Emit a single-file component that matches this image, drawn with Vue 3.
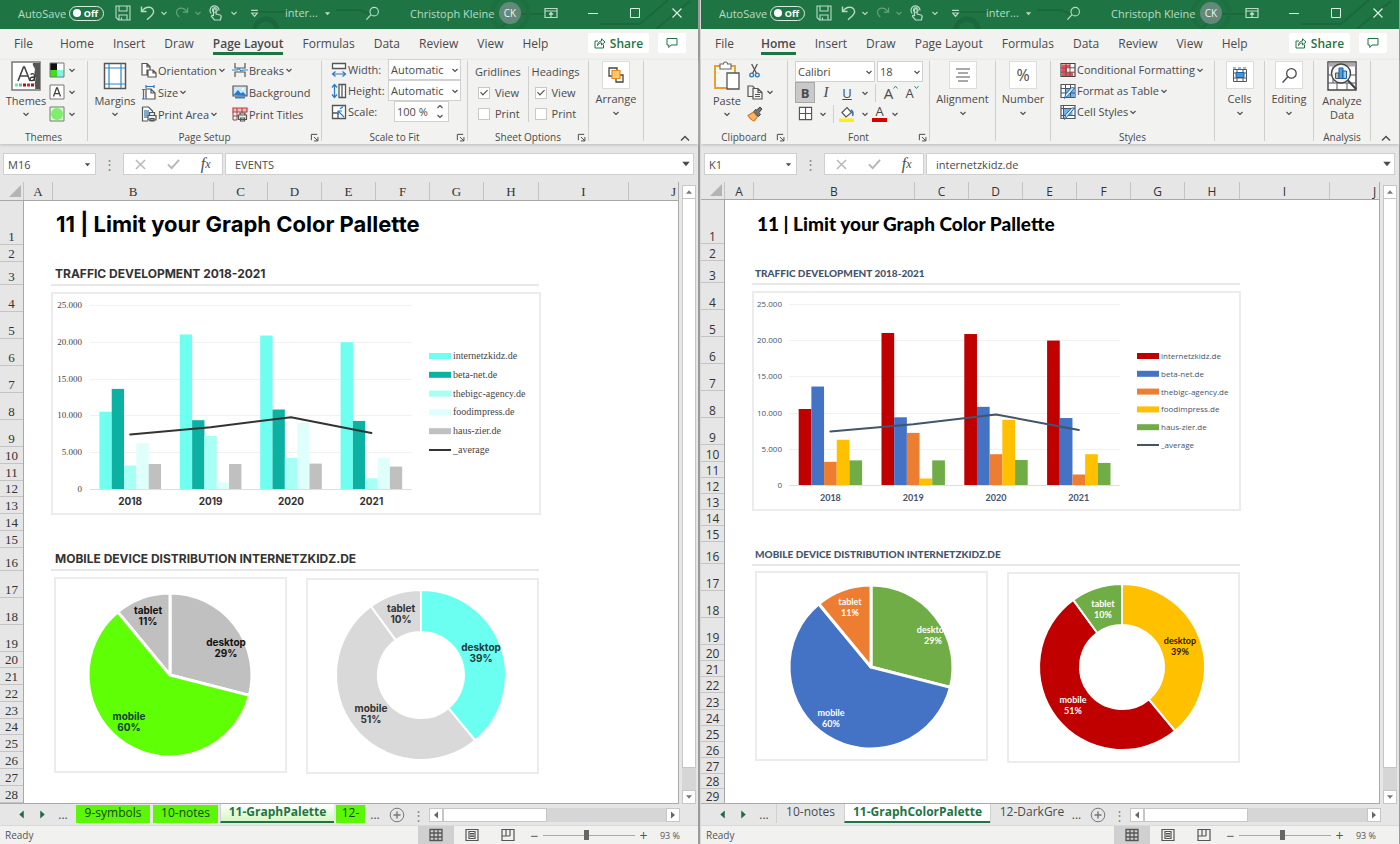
<script setup>
import { h } from 'vue'

const Ico = (p) =>
  h('svg', { class: 'ico', width: p.w || 16, height: p.h || p.w || 16, 'aria-hidden': 'true' }, [
    h('use', { href: '#i-' + p.n }),
  ])
Ico.props = ['n', 'w', 'h']

const names = ['File', 'Home', 'Insert', 'Draw', 'Page Layout', 'Formulas', 'Data', 'Review', 'View', 'Help']
const cols = ['A', 'B', 'C', 'D', 'E', 'F', 'G', 'H', 'I', 'J']
const series = ['internetzkidz.de', 'beta-net.de', 'thebigc-agency.de', 'foodimpress.de', 'haus-zier.de', '_average']
const years = [2018, 2019, 2020, 2021]
const values = [
  [10500, 13600, 3200, 6250, 3400],
  [21000, 9350, 7200, 900, 3400],
  [20850, 10800, 4250, 9000, 3450],
  [19950, 9250, 1450, 4250, 3050],
]
const average = [7400, 8400, 9750, 7600]

const wins = [
  {
    id: 'left', active: 'Page Layout', cell: 'M16', formula: 'EVENTS',
    rows: [44, 17, 23, 27, 27, 27, 27, 27, 27, 17, 17, 16, 17, 17, 17, 23, 27, 27, 27, 16, 17, 17, 17, 16, 17, 17, 17, 17],
    sheets: [
      { t: '9-symbols', c: 'green s1' }, { t: '10-notes', c: 'green s2' },
      { t: '11-GraphPalette', c: 'active s3' }, { t: '12-', c: 'green s4' },
    ],
    bar: {
      w: 490, h: 223, x: 39, cat: 80.4, y0: 197, y1: 13, ax: 31, lx: 378, ly: 64, ls: 18.8, ty: 213,
      colors: ['#6efff0', '#0cb1a2', '#a8fff3', '#dffffb', '#c0c0c0'], line: '#333333',
    },
    pies: [
      { w: 233, h: 196, cx: 116, cy: 98, r: 82, hole: 0, gap: 3, parts: [
        { v: 29, c: '#c0c0c0', t: 'desktop', x: 172, y: 69, f: '#111' },
        { v: 60, c: '#5fff05', t: 'mobile', x: 75, y: 143, f: '#143' },
        { v: 11, c: '#c0c0c0', t: 'tablet', x: 94, y: 37, f: '#111' }] },
      { w: 233, h: 196, cx: 115, cy: 97, r: 85, hole: 43, gap: 2, parts: [
        { v: 39, c: '#6afff0', t: 'desktop', x: 175, y: 73, f: '#1f3b3b' },
        { v: 51, c: '#d9d9d9', t: 'mobile', x: 65, y: 134, f: '#333' },
        { v: 10, c: '#d9d9d9', t: 'tablet', x: 95, y: 34, f: '#333' }] },
    ],
  },
  {
    id: 'right', active: 'Home', cell: 'K1', formula: 'internetzkidz.de',
    rows: [44, 17, 22, 27, 27, 27, 27, 27, 27, 17, 16, 16, 16, 16, 16, 22, 27, 27, 27, 16, 16, 16, 17, 16, 16, 16, 16, 15, 15],
    sheets: [
      { t: '10-notes', c: 'r1' }, { t: '11-GraphColorPalette', c: 'active r2' }, { t: '12-DarkGre', c: 'r3' },
    ],
    bar: {
      w: 489, h: 220, x: 37, cat: 82.8, y0: 194, y1: 13, ax: 30, lx: 385, ly: 65, ls: 17.8, ty: 210,
      colors: ['#c00000', '#4472c4', '#ed7d31', '#ffc000', '#70ad47'], line: '#44546a',
    },
    pies: [
      { w: 233, h: 190, cx: 116, cy: 96, r: 82, hole: 0, gap: 3, parts: [
        { v: 29, c: '#70ad47', t: 'desktop', x: 178, y: 62, f: '#fff' },
        { v: 60, c: '#4472c4', t: 'mobile', x: 76, y: 145, f: '#fff' },
        { v: 11, c: '#ed7d31', t: 'tablet', x: 95, y: 34, f: '#fff' }] },
      { w: 233, h: 191, cx: 115, cy: 95, r: 83, hole: 42, gap: 2, parts: [
        { v: 39, c: '#ffc000', t: 'desktop', x: 173, y: 72, f: '#2a1a00' },
        { v: 51, c: '#c00000', t: 'mobile', x: 66, y: 131, f: '#fff' },
        { v: 10, c: '#70ad47', t: 'tablet', x: 96, y: 35, f: '#fff' }] },
    ],
  },
]

const yOf = (b, v) => b.y0 - (v / 25000) * (b.y0 - b.y1)
const barW = (b) => (b.cat * 0.766) / 5
const barX = (b, g, i) => b.x + g * b.cat + b.cat * 0.117 + i * barW(b)
const avgPoints = (b) => average.map((v, g) => `${(b.x + b.cat * (g + 0.5)).toFixed(1)},${yOf(b, v).toFixed(1)}`).join(' ')
const fmt = (v) => (v ? v / 1000 + '.000' : '0')

function slices(p) {
  let acc = 0
  return p.parts.map((s) => {
    const a0 = (acc / 100) * 2 * Math.PI
    acc += s.v
    const a1 = (acc / 100) * 2 * Math.PI
    const pt = (r, a) => `${(p.cx + r * Math.sin(a)).toFixed(2)} ${(p.cy - r * Math.cos(a)).toFixed(2)}`
    const big = s.v > 50 ? 1 : 0
    const d = p.hole
      ? `M${pt(p.r, a0)}A${p.r} ${p.r} 0 ${big} 1 ${pt(p.r, a1)}L${pt(p.hole, a1)}A${p.hole} ${p.hole} 0 ${big} 0 ${pt(p.hole, a0)}Z`
      : `M${p.cx} ${p.cy}L${pt(p.r, a0)}A${p.r} ${p.r} 0 ${big} 1 ${pt(p.r, a1)}Z`
    return { ...s, d }
  })
}
</script>

<template>
  <svg class="sprite" aria-hidden="true">
    <symbol id="i-chev" viewBox="0 0 8 8"><path d="M1.500 3 4 5.400 6.500 3" fill="none" stroke="currentColor" stroke-width="1.100" /></symbol>
    <symbol id="i-caret" viewBox="0 0 8 8"><path d="M1 2.500h6L4 6z" fill="currentColor" /></symbol>
    <symbol id="i-up" viewBox="0 0 10 8"><path d="M1 6.500 5 2.500l4 4" fill="none" stroke="currentColor" stroke-width="1.400" /></symbol>
    <symbol id="i-save" viewBox="0 0 16 16"><path d="M1 1h14v14H3.500L1 12.500zM4 1v5h8V1M4 15v-5h8v5M6.500 12.500V15" fill="none" stroke="currentColor" stroke-width="1.100" /></symbol>
    <symbol id="i-undo" viewBox="0 0 16 16"><path d="M1.500 1.500v5h5M1.800 6.300C4 3.400 6 2.300 8.600 2.300c3 0 5 2 5 4.400 0 3-3 4.600-6.600 8" fill="none" stroke="currentColor" stroke-width="1.400" /></symbol>
    <symbol id="i-redo" viewBox="0 0 16 16"><path d="M14.500 1.500v5h-5M14 6.300C12 3.400 10 2.300 7.600 2.300c-3 0-5 2-5 4.400 0 2.500 1.500 3.600 3 5" fill="none" stroke="currentColor" stroke-width="1.200" /></symbol>
    <symbol id="i-touch" viewBox="0 0 16 16"><path d="M3.300 8.500A4.500 4.500 0 1 1 11 5.500M5.500 11V5a1.300 1.300 0 0 1 2.600 0v4l4 1c1 .3 1.200 1 1 2l-.7 3H6.500L3.500 11.500c-.5-.8.8-1.600 2-.5" fill="none" stroke="currentColor" stroke-width="1.200" /><circle cx="6.800" cy="5" r="2.500" fill="none" stroke="currentColor" /></symbol>
    <symbol id="i-qat" viewBox="0 0 8 8"><path d="M1 1.200h6M1.500 3.500h5L4 6.500z" fill="none" stroke="currentColor" /></symbol>
    <symbol id="i-search" viewBox="0 0 16 16"><circle cx="9.800" cy="6" r="4.500" fill="none" stroke="currentColor" stroke-width="1.200" /><path d="M6.500 9.200 1.500 14.500" stroke="currentColor" stroke-width="1.300" /></symbol>
    <symbol id="i-ribbon" viewBox="0 0 14 12"><path d="M1 1.500h12v9H1zM1 4h12M7 10V5.500M5 7.500l2-2 2 2" fill="none" stroke="currentColor" stroke-width="1.200" /></symbol>
    <symbol id="i-min" viewBox="0 0 10 10"><path d="M0 5.500h10" stroke="currentColor" /></symbol>
    <symbol id="i-max" viewBox="0 0 10 10"><path d="M.5.500h9v9h-9z" fill="none" stroke="currentColor" /></symbol>
    <symbol id="i-close" viewBox="0 0 10 10"><path d="m.5.500 9 9m0-9-9 9" stroke="currentColor" stroke-width="1.200" /></symbol>
    <symbol id="i-share" viewBox="0 0 12 12"><path d="M4 4H1v7h8.500V7.500M3.500 8.500c.3-3 1.700-4.300 4-4.500V1.800L11 5 7.500 8V5.900c-1.800 0-3 .7-4 2.600z" fill="none" stroke="currentColor" /></symbol>
    <symbol id="i-comment" viewBox="0 0 12 12"><path d="M1 1.500h10v6.500H5L2.800 10.500V8H1z" fill="none" stroke="currentColor" /></symbol>
    <symbol id="i-launch" viewBox="0 0 10 10"><path d="M1.500 8V1.500H8M4.500 4.500l4 4M8.800 4.500v4.300H4.500" fill="none" stroke="currentColor" stroke-width="1.100" /></symbol>

    <symbol id="i-themes" viewBox="0 0 30 30">
      <path d="M1 1h28v28H1z" fill="#fff" stroke="#777" stroke-width="1.500" /><path d="M22 2c-1 3 2 4 2 7-2 5 2 7 0 12-1 3 1 5 0 7h5V2z" fill="#555" />
      <path d="M7 20 12.500 6h1L19 20M9 15h8" fill="none" stroke="#444" stroke-width="1.600" />
      <path d="M19.500 13.500c2-1.500 4-1 4 1.500v5M23.500 16c-6 0-5 4-2.500 3.600 1.500-.2 2.500-1 2.500-2.600" fill="none" stroke="#333" stroke-width="1.300" />
      <path d="M4 22.500h3v3H4z" fill="#6ee7a0" /><path d="M8 22.500h3v3H8z" fill="#7aa" /><path d="M12 22.500h3v3h-3z" fill="#a11" /><path d="M16 22.500h3v3h-3z" fill="#d22" /><path d="M20 22.500h3v3h-3z" fill="#822" />
    </symbol>
    <symbol id="i-colors" viewBox="0 0 16 16"><path d="M1 1h7v7H1z" fill="#111" /><path d="M8 1h7v7H8z" fill="#fff" /><path d="M1 8h7v7H1z" fill="#3ee01a" /><path d="M8 8h7v7H8z" fill="#7ff5ea" /><path d="M1 1h14v14H1z" fill="none" stroke="#777" /></symbol>
    <symbol id="i-fonts" viewBox="0 0 16 16"><path d="M1 1h14v14H1z" fill="#fff" stroke="#777" /><path d="M4.500 12.500 7.600 4h.8l3.100 8.500M5.500 9.700h5" fill="none" stroke="#444" stroke-width="1.300" /></symbol>
    <symbol id="i-effects" viewBox="0 0 16 16"><path d="M1 1h14v14H1z" fill="#d9ffd0" stroke="#777" /><circle cx="8" cy="8" r="6" fill="#7cf06a" /></symbol>
    <symbol id="i-margins" viewBox="0 0 24 28"><path d="M1.500 1.500h21v25h-21z" fill="#fff" stroke="#555" stroke-width="1.500" /><path d="M6 2v24M18 2v24M2 6h20M2 22h20" stroke="#2b88c4" stroke-width="1.200" /></symbol>
    <symbol id="i-orient" viewBox="0 0 16 16"><path d="M1 1.500h5l3 3V8H6v5H1zM6 1.500V5h3M7 8h5l3 3v4H7zM12 8v3h3" fill="#fff" stroke="#555" stroke-width="1.200" /></symbol>
    <symbol id="i-size" viewBox="0 0 16 16"><path d="M5 5h5l4 4v6H5zM10 5v4h4" fill="#fff" stroke="#555" stroke-width="1.200" /><path d="M5 1v3M13 1v3M5 2.500h8M1 5.500h3M1 15h3M2.500 5.500V15" stroke="#2b78c4" stroke-width="1.200" /></symbol>
    <symbol id="i-parea" viewBox="0 0 16 16"><path d="M1.500 1h6l4 4v4M1.500 1v14H7" fill="#fff" stroke="#555" stroke-width="1.200" /><path d="M3 4h5v8H3z" fill="#7fa8cc" /><path d="M7 9.500h8V14H7zM8.500 9.500v-3h5v3M9 12.500h4V15H9z" fill="#eee" stroke="#555" stroke-width="1.200" /></symbol>
    <symbol id="i-breaks" viewBox="0 0 16 16"><path d="M3 1v5h10V1M3 15v-5h10v5" fill="none" stroke="#555" stroke-width="1.200" /><path d="M0 8h5l2-1.500L9 9l2-1h5" fill="none" stroke="#2b88c4" stroke-width="1.200" /></symbol>
    <symbol id="i-bg" viewBox="0 0 16 16"><path d="M1 2h14v10H1z" fill="#cde6fa" stroke="#555" stroke-width="1.200" /><path d="m1.500 11 4.500-5 3 3.500L11 8l4 4z" fill="#2b78c4" /><path d="M3 12.500h10v2H3z" fill="#3b7fc4" /><circle cx="11" cy="5" r="1.200" fill="#fff" /></symbol>
    <symbol id="i-ptitles" viewBox="0 0 16 16"><path d="M1 2h14v4H1z" fill="#f7b8bc" stroke="#d13438" stroke-width="1.200" /><path d="M5 2v4M10 2v4M1 6v8h4M1 10h5M5 6v8" stroke="#8a4a4a" fill="none" /><path d="M6.500 9h8v4.500h-8zM8 9V7h5v2M8.500 12h4v3h-4z" fill="#eee" stroke="#555" stroke-width="1.200" /></symbol>
    <symbol id="i-width" viewBox="0 0 16 16"><path d="M1.500 1.500h13v5h-13z" fill="#fff" stroke="#555" stroke-width="1.300" /><path d="M1.500 12h13M4.500 9.500 1.500 12l3 2.500M11.500 9.500l3 2.500-3 2.500" fill="none" stroke="#2b78c4" stroke-width="1.200" /></symbol>
    <symbol id="i-height" viewBox="0 0 16 16"><path d="M8 1.500h6.500v13H8zM11 1.500v13" fill="#fff" stroke="#555" stroke-width="1.300" /><path d="M3.500 1.500v13M1 4.500l2.500-3 2.500 3M1 11.500l2.500 3 2.500-3" fill="none" stroke="#2b78c4" stroke-width="1.200" /></symbol>
    <symbol id="i-scale" viewBox="0 0 16 16"><path d="M1.500 1.500h13v13h-13zM1.500 9H7v5.500" fill="#fff" stroke="#555" stroke-width="1.300" /><path d="m13 13-6-6M7 11V7h4M9 5l3-2.500" fill="none" stroke="#2b78c4" stroke-width="1.200" /></symbol>
    <symbol id="i-arrange" viewBox="0 0 16 16"><path d="M1 1h8v8H1zM8 8h7v7H8z" fill="none" stroke="#444" stroke-width="1.300" /><path d="M4 3.500h8v8H4z" fill="#ffc96b" stroke="#e58a1c" stroke-width="1.200" /></symbol>

    <symbol id="i-paste" viewBox="0 0 28 30"><path d="M2 5h20v22H2z" fill="#f8f8f6" stroke="#e8a030" stroke-width="2" /><path d="M7 3h3.500a2 2 0 0 1 4 0H18v5H7z" fill="#fff" stroke="#666" stroke-width="1.100" /><path d="M14 12h12v16H14z" fill="#fff" stroke="#555" stroke-width="1.300" /></symbol>
    <symbol id="i-cut" viewBox="0 0 16 16"><path d="m5 1 5 10M11 1 6 11" stroke="#555" stroke-width="1.400" /><circle cx="5" cy="12.800" r="2" fill="none" stroke="#2b78c4" stroke-width="1.400" /><circle cx="11" cy="12.800" r="2" fill="none" stroke="#2b78c4" stroke-width="1.400" /></symbol>
    <symbol id="i-copy" viewBox="0 0 16 16"><path d="M6 12.500H1V2h4.500l2 2M6 4.500h5l4 4V15H6zM11 4.500v4h4M8 10.500h5M8 12.500h5" fill="none" stroke="#555" stroke-width="1.200" /></symbol>
    <symbol id="i-brush" viewBox="0 0 16 16"><path d="M1 9.500 6.500 6l4 4.500L7 15c-2-.5-4-2.500-6-5.500z" fill="#f9b66a" stroke="#d97b1c" stroke-width="1.200" /><path d="m7 5.500 4.500 5 2-2-1.500-2L15 3l-2-2-3.200 3L8.500 3.500z" fill="#777" stroke="#444" /></symbol>
    <symbol id="i-borders" viewBox="0 0 16 16"><path d="M1.500 1.500h13v13h-13zM8 1.500v13M1.500 8h13" fill="#fff" stroke="#555" stroke-width="1.200" /></symbol>
    <symbol id="i-fill" viewBox="0 0 16 16"><path d="M0 12.500h15V16H0z" fill="#ffee10" /><path d="m3 6.500 5-5 4.500 5-5.500 4.500z" fill="#fff" stroke="#555" stroke-width="1.200" /><path d="M12 4c1.500 1 2.500 3 1.500 6" fill="none" stroke="#2b78c4" stroke-width="1.600" /></symbol>
    <symbol id="i-bigger" viewBox="0 0 5 5"><path d="M.5 3.500 2.500 1.200l2 2.300" fill="none" stroke="#2a8a86" /></symbol>
    <symbol id="i-smaller" viewBox="0 0 5 5"><path d="M.5 1.200 2.500 3.500l2-2.300" fill="none" stroke="#2a8a86" /></symbol>
    <symbol id="i-align" viewBox="0 0 16 16"><path d="M1 2h14M3 6h10M1 10h14M3 14h10" stroke="#555" stroke-width="1.200" /></symbol>
    <symbol id="i-cond" viewBox="0 0 16 16"><path d="M1 1.500h14v13H1z" fill="#fff" stroke="#444" stroke-width="1.200" /><path d="M2 2.500h8v3H2zM2 6h5v4H2zM2 10.500h11V14H2z" fill="#e8505b" /><path d="M1 5.800h14M1 10.200h14M10 2v13M6 2v13" stroke="#744" /></symbol>
    <symbol id="i-ftable" viewBox="0 0 16 16"><path d="M1 1.500h14v13H1z" fill="#fff" stroke="#555" stroke-width="1.200" /><path d="M6 6h9v8H6z" fill="#6fb2ee" /><path d="M1 5.500h14M1 10h14M5.500 2v12M10.500 2v12" stroke="#456" /><path d="m14.500 5-6 7-4 3.500 1.200-4.500 6-6.500z" fill="#d6eaff" stroke="#2b68a4" /></symbol>
    <symbol id="i-styles" viewBox="0 0 16 16"><path d="M1 1.500h14v13H1z" fill="#fff" stroke="#555" stroke-width="1.200" /><path d="M3.500 4.500h9v7h-9z" fill="#6fb2ee" /><path d="M1 4.500h14M1 11.500h14M3.500 2v12" stroke="#456" /><path d="m14.500 4-6 7-4 4.500 1.200-5 6-6.500z" fill="#d6eaff" stroke="#2b68a4" /></symbol>
    <symbol id="i-cells" viewBox="0 0 16 16"><path d="M1.500 2.500h13v12h-13zM5 2.500v12M11 2.500v12M1.500 6h13M1.500 11h13" fill="#fff" stroke="#555" /><path d="M4 5.500h8v5H4z" fill="#3f96e6" stroke="#1f5f9f" /><path d="M1 1h14" stroke="#2b78c4" stroke-dasharray="3 2" /></symbol>
    <symbol id="i-analyze" viewBox="0 0 30 30"><path d="M1 1h28v28H1z" fill="#fff" stroke="#444" stroke-width="1.400" /><path d="M1.500 1.500h27v4h-27z" fill="#aaa" /><path d="M1 14h28M1 22h28M10 22v7M20 22v7M6 6v16" stroke="#555" /><circle cx="14" cy="12.500" r="9.500" fill="#f4f8fb" stroke="#444" stroke-width="1.400" /><path d="m21 19.500 8 8.500" stroke="#444" stroke-width="2.200" /><path d="M8.500 12h3.500v5.500H8.500z" fill="#bbb" stroke="#555" /><path d="M12 7h4v10.500h-4z" fill="#4b9fe8" stroke="#1f5f9f" /><path d="M16 10h3.500v7.500H16z" fill="#9bc9ef" stroke="#1f5f9f" /></symbol>

    <symbol id="i-x" viewBox="0 0 12 12"><path d="m1 1 10 10M11 1 1 11" stroke="#b5b5b5" stroke-width="1.500" /></symbol>
    <symbol id="i-ok" viewBox="0 0 14 12"><path d="m1 6.500 4 4L13 1.500" fill="none" stroke="#b5b5b5" stroke-width="2" /></symbol>
    <symbol id="i-corner" viewBox="0 0 12 12"><path d="M12 0v12H0z" fill="#b4b4b4" /></symbol>
    <symbol id="i-tl" viewBox="0 0 8 8"><path d="M6 .5v7L2 4z" fill="currentColor" /></symbol>
    <symbol id="i-tr" viewBox="0 0 8 8"><path d="M2 .5v7L6 4z" fill="currentColor" /></symbol>
    <symbol id="i-tu" viewBox="0 0 8 8"><path d="M1 5.800h6L4 2.200z" fill="currentColor" /></symbol>
    <symbol id="i-td" viewBox="0 0 8 8"><path d="M1 2.200h6L4 5.800z" fill="currentColor" /></symbol>
    <symbol id="i-add" viewBox="0 0 16 16"><circle cx="8" cy="8" r="6.800" fill="none" stroke="#777" /><path d="M8 4.500v7M4.500 8h7" stroke="#777" stroke-width="1.400" /></symbol>
    <symbol id="i-normal" viewBox="0 0 14 14"><path d="M1 1.500h12v11H1zM1 5h12M1 9h12M5 1.500v11M9 1.500v11" fill="none" stroke="#555" stroke-width="1.300" /></symbol>
    <symbol id="i-plview" viewBox="0 0 14 14"><path d="M1 1.500h12v11H1zM4 3.500h6v7H4zM5 5.500h4M5 7h4M5 8.500h4" fill="none" stroke="#555" stroke-width="1.200" /></symbol>
    <symbol id="i-pbview" viewBox="0 0 14 14"><path d="M1 1.500h12v11H1zM5 1.500V8M9 1.500V8M1 8h8" fill="none" stroke="#555" stroke-width="1.200" /></symbol>
  </svg>

  <main class="desk">
    <section v-for="w in wins" :key="w.id" class="win" :class="w.id">
      <header class="titlebar">
        <svg class="deco" viewBox="0 0 698 29" preserveAspectRatio="none" aria-hidden="true">
          <path d="M250 12h40M336 10h24l10 4M600 24h40l28-24M500 28l20-14h30M656 29l34-28" fill="none" stroke="#1b683d" stroke-width="2" />
          <circle cx="266" cy="30" r="11" fill="none" stroke="#1b683d" stroke-width="5" /><circle cx="510" cy="13" r="18" fill="none" stroke="#1d6e41" stroke-width="4" />
        </svg>
        <label class="autosave"><span>AutoSave</span><input type="checkbox" class="sr" /><b class="toggle"><i></i>Off</b></label>
        <button class="t-save" aria-label="Save"><Ico n="save" w="16" /></button>
        <button class="t-undo" aria-label="Undo"><Ico n="undo" w="16" /></button>
        <button class="t-chev" aria-label="Undo list"><Ico n="chev" w="8" /></button>
        <button class="t-redo dim" aria-label="Redo"><Ico n="redo" w="15" /></button>
        <button class="t-chev dim" aria-label="Redo list"><Ico n="chev" w="8" /></button>
        <button class="t-touch" aria-label="Touch mode"><Ico n="touch" w="16" /></button>
        <button class="t-chev" aria-label="Touch options"><Ico n="chev" w="8" /></button>
        <button class="t-qat" aria-label="Customize toolbar"><Ico n="qat" w="9" /></button>
        <span class="docname">inter...</span>
        <button class="t-caret" aria-label="File info"><Ico n="caret" w="7" /></button>
        <button class="t-search" aria-label="Search"><Ico n="search" w="15" /></button>
        <span class="user">Christoph Kleine</span>
        <span class="avatar">CK</span>
        <button class="t-ribbon" aria-label="Ribbon display"><Ico n="ribbon" w="14" h="12" /></button>
        <button class="t-win" aria-label="Minimize"><Ico n="min" w="10" /></button>
        <button class="t-win" aria-label="Maximize"><Ico n="max" w="10" /></button>
        <button class="t-win" aria-label="Close"><Ico n="close" w="10" /></button>
      </header>

      <nav class="tabs">
        <a v-for="t in names" :key="t" href="#" :class="{ on: t === w.active }">{{ t }}</a>
        <span class="grow"></span>
        <button class="share"><Ico n="share" w="12" />Share</button>
        <button class="comment" aria-label="Comments"><Ico n="comment" w="12" /></button>
      </nav>

      <div v-if="w.id === 'left'" class="ribbon">
        <div class="group g-themes">
          <div class="body">
            <button class="big"><Ico n="themes" w="30" /><span>Themes</span><Ico n="chev" w="8" /></button>
            <div class="stack narrow">
              <button aria-label="Theme colors"><Ico n="colors" w="16" /><Ico n="chev" w="8" /></button>
              <button aria-label="Theme fonts"><Ico n="fonts" w="16" /><Ico n="chev" w="8" /></button>
              <button aria-label="Theme effects"><Ico n="effects" w="16" /><Ico n="chev" w="8" /></button>
            </div>
          </div>
          <div class="glabel"><span>Themes</span></div>
        </div>
        <span class="sep"></span>
        <div class="group g-setup">
          <div class="body">
            <button class="big"><Ico n="margins" w="24" h="30" /><span>Margins</span><Ico n="chev" w="8" /></button>
            <div class="stack c1">
              <button><Ico n="orient" />Orientation<Ico n="chev" w="8" /></button>
              <button><Ico n="size" />Size<Ico n="chev" w="8" /></button>
              <button><Ico n="parea" />Print Area<Ico n="chev" w="8" /></button>
            </div>
            <div class="stack c2">
              <button><Ico n="breaks" />Breaks<Ico n="chev" w="8" /></button>
              <button><Ico n="bg" />Background</button>
              <button><Ico n="ptitles" />Print Titles</button>
            </div>
          </div>
          <div class="glabel"><span>Page Setup</span><button aria-label="Page setup options"><Ico n="launch" w="9" /></button></div>
        </div>
        <span class="sep"></span>
        <div class="group g-scale">
          <div class="body">
            <div class="stack tight">
              <div class="field"><Ico n="width" /><label for="fw">Width:</label><span class="sel"><select id="fw"><option>Automatic</option></select><Ico n="chev" w="8" /></span></div>
              <div class="field"><Ico n="height" /><label for="fh">Height:</label><span class="sel"><select id="fh"><option>Automatic</option></select><Ico n="chev" w="8" /></span></div>
              <div class="field"><Ico n="scale" /><label for="fs">Scale:</label><span class="spin"><input id="fs" type="text" value="100 %" /><span class="arrows"><button aria-label="Increase"><Ico n="chev" w="8" class="flip" /></button><button aria-label="Decrease"><Ico n="chev" w="8" /></button></span></span></div>
            </div>
          </div>
          <div class="glabel"><span>Scale to Fit</span><button aria-label="Scale options"><Ico n="launch" w="9" /></button></div>
        </div>
        <span class="sep"></span>
        <div class="group g-sheet">
          <div class="body">
            <fieldset class="checks">
              <legend>Gridlines</legend>
              <label><input type="checkbox" checked />View</label>
              <label><input type="checkbox" />Print</label>
            </fieldset>
            <span class="sep short"></span>
            <fieldset class="checks">
              <legend>Headings</legend>
              <label><input type="checkbox" checked />View</label>
              <label><input type="checkbox" />Print</label>
            </fieldset>
          </div>
          <div class="glabel"><span>Sheet Options</span><button aria-label="Sheet options dialog"><Ico n="launch" w="9" /></button></div>
        </div>
        <span class="sep"></span>
        <div class="group g-arr"><button class="boxed"><i><Ico n="arrange" w="16" /></i><span>Arrange</span><Ico n="chev" w="8" /></button></div>
        <span class="sep"></span>
        <button class="collapse" aria-label="Collapse ribbon"><Ico n="up" w="10" h="8" /></button>
      </div>

      <div v-else class="ribbon">
        <div class="group g-clip">
          <div class="body">
            <button class="big"><Ico n="paste" w="28" h="30" /><span>Paste</span><Ico n="chev" w="8" /></button>
            <div class="stack narrow">
              <button aria-label="Cut"><Ico n="cut" w="15" /></button>
              <button aria-label="Copy"><Ico n="copy" w="16" /><Ico n="chev" w="8" /></button>
              <button aria-label="Format painter"><Ico n="brush" w="16" /></button>
            </div>
          </div>
          <div class="glabel"><span>Clipboard</span><button aria-label="Clipboard options"><Ico n="launch" w="9" /></button></div>
        </div>
        <span class="sep"></span>
        <div class="group g-font">
          <div class="body fontbody">
            <div class="frow top">
              <span class="sel fam"><select aria-label="Font"><option>Calibri</option></select><Ico n="chev" w="8" /></span>
              <span class="sel siz"><select aria-label="Font size"><option>18</option></select><Ico n="chev" w="8" /></span>
            </div>
            <div class="frow">
              <button class="fb pressed"><b>B</b></button><button class="fb it">I</button><button class="fb"><u>U</u></button><button class="fc" aria-label="Underline styles"><Ico n="chev" w="8" /></button>
              <span class="sep mini"></span>
              <button class="fb grow1" aria-label="Increase font size">A<Ico n="bigger" w="5" /></button><button class="fb shrink1" aria-label="Decrease font size">A<Ico n="smaller" w="5" /></button>
            </div>
            <div class="frow">
              <button class="fb" aria-label="Borders"><Ico n="borders" w="15" /></button><button class="fc" aria-label="Border styles"><Ico n="chev" w="8" /></button>
              <span class="sep mini"></span>
              <button class="fb" aria-label="Fill color"><Ico n="fill" w="16" /></button><button class="fc" aria-label="Fill colors"><Ico n="chev" w="8" /></button>
              <button class="fb fcol">A</button><button class="fc" aria-label="Font colors"><Ico n="chev" w="8" /></button>
            </div>
          </div>
          <div class="glabel"><span>Font</span><button aria-label="Font options"><Ico n="launch" w="9" /></button></div>
        </div>
        <span class="sep"></span>
        <div class="group g-align"><button class="boxed"><i><Ico n="align" w="16" /></i><span>Alignment</span><Ico n="chev" w="8" /></button></div>
        <span class="sep"></span>
        <div class="group g-num"><button class="boxed"><i class="pct">%</i><span>Number</span><Ico n="chev" w="8" /></button></div>
        <span class="sep"></span>
        <div class="group g-styles">
          <div class="body">
            <div class="stack tight">
              <button><Ico n="cond" />Conditional Formatting<Ico n="chev" w="8" /></button>
              <button><Ico n="ftable" />Format as Table<Ico n="chev" w="8" /></button>
              <button><Ico n="styles" />Cell Styles<Ico n="chev" w="8" /></button>
            </div>
          </div>
          <div class="glabel"><span>Styles</span></div>
        </div>
        <span class="sep"></span>
        <div class="group g-cells"><button class="boxed"><i><Ico n="cells" w="16" /></i><span>Cells</span><Ico n="chev" w="8" /></button></div>
        <span class="sep"></span>
        <div class="group g-edit"><button class="boxed"><i><Ico n="search" w="17" /></i><span>Editing</span><Ico n="chev" w="8" /></button></div>
        <span class="sep"></span>
        <div class="group g-ana">
          <div class="body"><button class="big"><Ico n="analyze" w="30" /><span>Analyze<br />Data</span></button></div>
          <div class="glabel"><span>Analysis</span></div>
        </div>
        <span class="sep"></span>
        <button class="collapse" aria-label="Collapse ribbon"><Ico n="up" w="10" h="8" /></button>
      </div>

      <div class="fbar">
        <span class="namebox"><input type="text" :value="w.cell" aria-label="Name box" /><button aria-label="Names"><Ico n="caret" w="7" /></button></span>
        <span class="dots">⋮</span>
        <span class="fx"><button aria-label="Cancel"><Ico n="x" w="11" /></button><button aria-label="Enter"><Ico n="ok" w="13" h="12" /></button><button class="fxb">f<small>x</small></button></span>
        <span class="formula"><input type="text" :value="w.formula" aria-label="Formula" /><button aria-label="Expand"><Ico n="td" w="10" /></button></span>
      </div>

      <div class="sheet">
        <div class="grid">
          <div class="colhead">
            <span class="corner"><Ico n="corner" w="12" /></span>
            <span v-for="c in cols" :key="c" class="col" :class="'col-' + c">{{ c }}</span>
          </div>
          <div class="gridbody">
            <div class="rowhead"><span v-for="(r, i) in w.rows" :key="i" :style="{ height: r + 'px' }">{{ i + 1 }}</span></div>
            <div class="cells">
              <h1>11 | Limit your Graph Color Pallette</h1>
              <h2>TRAFFIC DEVELOPMENT 2018-2021</h2>
              <figure class="frame barframe">
                <svg :viewBox="`2 2 ${w.bar.w - 4} ${w.bar.h - 4}`" :width="w.bar.w - 4" :height="w.bar.h - 4" role="img" aria-label="Traffic development">
                  <g v-for="k in [0, 5000, 10000, 15000, 20000, 25000]" :key="k">
                    <line :x1="w.bar.x" :x2="w.bar.x + 4 * w.bar.cat" :y1="Math.round(yOf(w.bar, k)) + 0.5" :y2="Math.round(yOf(w.bar, k)) + 0.5" :stroke="k ? '#f1f1f1' : '#dedede'" />
                    <text class="tick" :x="w.bar.ax" :y="yOf(w.bar, k) + 3" text-anchor="end">{{ fmt(k) }}</text>
                  </g>
                  <g v-for="(row, g) in values" :key="g">
                    <rect v-for="(v, i) in row" :key="i" :x="barX(w.bar, g, i)" :y="yOf(w.bar, v)" :width="barW(w.bar)" :height="w.bar.y0 - yOf(w.bar, v)" :fill="w.bar.colors[i]" />
                    <text class="year" :x="w.bar.x + w.bar.cat * (g + 0.5)" :y="w.bar.ty" text-anchor="middle">{{ years[g] }}</text>
                  </g>
                  <polyline :points="avgPoints(w.bar)" fill="none" :stroke="w.bar.line" stroke-width="2" stroke-linecap="round" stroke-linejoin="round" />
                  <g v-for="(s, i) in series" :key="s">
                    <rect :x="w.bar.lx" :y="w.bar.ly + i * w.bar.ls - (i < 5 ? 3 : 1)" width="22" :height="i < 5 ? 6 : 2" :fill="w.bar.colors[i] || w.bar.line" />
                    <text class="leg" :x="w.bar.lx + 24" :y="w.bar.ly + i * w.bar.ls + 3">{{ s }}</text>
                  </g>
                </svg>
              </figure>
              <h2 class="second">MOBILE DEVICE DISTRIBUTION INTERNETZKIDZ.DE</h2>
              <div class="pies">
                <figure v-for="(p, i) in w.pies" :key="i" class="frame">
                  <svg :viewBox="`2 2 ${p.w - 4} ${p.h - 4}`" :width="p.w - 4" :height="p.h - 4" role="img" aria-label="Device distribution">
                    <path v-for="s in slices(p)" :key="s.t" :d="s.d" :fill="s.c" stroke="#fff" :stroke-width="p.gap" stroke-linejoin="round" />
                    <text v-for="s in p.parts" :key="s.t + 'l'" class="plabel" :fill="s.f" text-anchor="middle">
                      <tspan :x="s.x" :y="s.y">{{ s.t }}</tspan><tspan :x="s.x" :y="s.y + 11">{{ s.v }}%</tspan>
                    </text>
                  </svg>
                </figure>
              </div>
            </div>
          </div>
        </div>
        <div class="vscroll"><button aria-label="Scroll up"><Ico n="tu" w="8" /></button><span class="vthumb"></span><span class="vtrack"></span><button aria-label="Scroll down"><Ico n="td" w="8" /></button></div>
      </div>

      <div class="sheetbar">
        <button class="nav" aria-label="Previous sheet"><Ico n="tl" w="9" /></button>
        <button class="nav" aria-label="Next sheet"><Ico n="tr" w="9" /></button>
        <span class="more">...</span>
        <a v-for="s in w.sheets" :key="s.t" href="#" class="stab" :class="s.c">{{ s.t }}</a>
        <span class="more">...</span>
        <button class="add" aria-label="New sheet"><Ico n="add" w="16" /></button>
        <span class="dots">⋮</span>
        <div class="hscroll"><button aria-label="Scroll left"><Ico n="tl" w="8" /></button><span class="hthumb"></span><span class="htrack"></span><button aria-label="Scroll right"><Ico n="tr" w="8" /></button></div>
      </div>

      <footer class="status">
        <span class="ready">Ready</span>
        <button class="view sel-view" aria-label="Normal view"><Ico n="normal" w="14" /></button>
        <button class="view" aria-label="Page layout view"><Ico n="plview" w="14" /></button>
        <button class="view" aria-label="Page break preview"><Ico n="pbview" w="14" /></button>
        <button class="zb" aria-label="Zoom out">−</button>
        <input class="zoom" type="range" min="0" max="200" value="95" aria-label="Zoom" />
        <button class="zb" aria-label="Zoom in">+</button>
        <span class="pc">93 %</span>
      </footer>
    </section>
  </main>
</template>

<style>
html, body { margin: 0; background: #e6e6e6; }
</style>

<style scoped>
.sprite { position: absolute; width: 0; height: 0; }
.desk { display: flex; height: 100vh; overflow: hidden; font-family: "Open Sans", "Noto Sans", sans-serif; font-size: 11px; color: #4a4a4a; }
.desk * { box-sizing: border-box; }
button { border: 0; background: none; padding: 0; margin: 0; font: inherit; color: inherit; display: flex; align-items: center; justify-content: center; }
input, select { font: inherit; color: inherit; margin: 0; border: 0; background: none; padding: 0; outline: 0; min-width: 0; }
a { color: inherit; text-decoration: none; }
.ico { display: block; flex: none; }
.flip { transform: rotate(180deg); }
.win { flex: 1 1 0; min-width: 0; display: flex; flex-direction: column; background: #e6e6e6; }
.left { border-right: 2px solid #9a9a9a; }
.right { border-left: 1px solid #d8d8d8; border-right: 1px solid #9a9a9a; }
.sr { position: absolute; opacity: 0; width: 1px; height: 1px; }

.titlebar { position: relative; display: flex; align-items: flex-start; height: 29px; flex: none; background: #1f7444; color: #b9dcc6; padding-left: 18px; }
.deco { position: absolute; inset: 0; width: 100%; height: 29px; }
.titlebar > :not(.deco) { position: relative; flex: none; height: 26px; }
.autosave { display: flex; align-items: center; width: 92px; }
.autosave span { width: 51px; }
.toggle { display: flex; align-items: center; justify-content: space-between; width: 35px; height: 15px; border: 1px solid #d6ecdf; border-radius: 8px; padding: 0 5px 0 3px; font-size: 9px; color: #fff; }
.toggle i { width: 8px; height: 8px; border-radius: 4px; background: #fff; }
.t-save { width: 26px; } .t-undo { width: 23px; } .t-chev { width: 10px; } .t-redo { width: 24px; } .t-touch { width: 26px; } .t-qat { width: 30px; }
.dim { opacity: 0.45; }
.docname { width: 50px; padding-left: 16px; line-height: 26px; white-space: nowrap; }
.t-caret { width: 16px; }
.t-search { width: 28px; margin-left: auto; }
.user { width: 106px; padding-left: 24px; line-height: 27px; white-space: nowrap; }
.titlebar > .avatar { width: 22px; height: 22px; line-height: 22px; border-radius: 11px; margin: 2px 9px 0 7px; background: #64897a; color: #eaf5ee; text-align: center; font-size: 10px; }
.t-ribbon { width: 42px; } .t-win { width: 42px; color: #dcefe3; }

.tabs { display: flex; align-items: flex-start; height: 31px; flex: none; background: #f2f2f1; padding: 4px 12px 0 14px; gap: 19px; font-size: 12px; }
.tabs a { height: 22px; line-height: 21px; border-bottom: 3px solid transparent; white-space: nowrap; }
.tabs a:first-child { margin-right: 8px; }
.tabs a.on { font-weight: 600; border-color: #1f7444; }
.grow { flex: 1; }
.share, .comment { height: 20px; background: #fff; border-radius: 2px; color: #1f7444; }
.share { width: 61px; gap: 4px; font-weight: 600; margin-right: -10px; }
.comment { width: 28px; }

.ribbon { display: flex; height: 84px; flex: none; background: #f2f2f1; box-shadow: 0 1px 3px #bbb; }
.sep { width: 1px; height: 80px; background: #cfcfcf; flex: none; margin-top: 1px; }
.group { display: flex; flex-direction: column; flex: none; }
.body { display: flex; height: 70px; }
.glabel { display: flex; align-items: center; height: 14px; font-size: 10px; }
.glabel span { flex: 1; text-align: center; white-space: nowrap; }
.glabel button { width: 14px; margin-left: -14px; }
.g-themes { width: 87px; } .g-setup { width: 233px; } .g-scale { width: 145px; } .g-sheet { width: 120px; } .g-arr { width: 54px; }
.g-clip { width: 86px; } .g-font { width: 141px; } .g-align { width: 65px; } .g-num { width: 54px; } .g-styles { width: 163px; } .g-cells { width: 49px; } .g-edit { width: 48px; } .g-ana { width: 56px; }
.big { flex-direction: column; justify-content: flex-start; width: 52px; padding-top: 1px; flex: none; }
.big span { line-height: 14px; margin: 3px 0 2px; text-align: center; }
.g-setup .big { margin-left: 1px; }
.g-ana .big { width: 56px; }
.stack { display: flex; flex-direction: column; margin-top: -1px; }
.stack > * { display: flex; justify-content: flex-start; align-items: center; height: 22px; gap: 1px; white-space: nowrap; }
.stack.tight > * { height: 21px; }
.narrow { margin-left: -3px; }
.narrow > * { gap: 3px; }
.c1 { width: 91px; }
.g-scale .stack, .g-styles .stack { margin-left: 9px; }
.g-clip .stack { margin-left: -6px; }
.field label { width: 41px; }
.sel, .spin { display: flex; align-items: center; background: #fff; border: 1px solid #d0d0d0; height: 21px; }
.sel { width: 73px; padding: 0 1px 0 2px; margin-left: -2px; }
.sel select { flex: 1; appearance: none; }
.spin { width: 55px; margin-left: 4px; padding: 0 4px 0 2px; }
.spin input { width: 32px; flex: 1; }
.arrows button { height: 9px; }
.checks { border: 0; margin: 0; padding: 3px 0 0 7px; display: flex; flex-direction: column; width: 61px; min-width: 0; white-space: nowrap; }
.checks legend { padding: 0; height: 18px; line-height: 18px; float: left; margin-bottom: 1px; }
.checks label { display: flex; align-items: center; height: 21px; gap: 5px; padding-left: 3px; clear: both; }
.checks input { appearance: none; width: 12px; height: 12px; background: #fff; border: 1px solid #c8c8c8; display: flex; justify-content: center; }
.checks input:checked::before { content: ""; width: 3px; height: 6px; border: solid #444; border-width: 0 1px 1px 0; transform: rotate(45deg); }
.short { height: 56px; margin-top: 6px; }
.g-sheet .checks + .short + .checks { padding-left: 3px; }
.boxed { flex-direction: column; justify-content: flex-start; padding-top: 1px; }
.boxed i { display: flex; align-items: center; justify-content: center; width: 28px; height: 28px; background: #fff; border: 1px solid #dcdcdc; font-style: normal; }
.boxed span { line-height: 16px; margin: 2px 0; }
.boxed .pct { font-size: 16px; }
.collapse { margin: auto 8px 2px auto; }
.fontbody { flex-direction: column; padding-left: 7px; }
.frow { display: flex; align-items: center; height: 21px; }
.frow.top { gap: 2px; margin-top: 1px; }
.frow .sel { margin: 0; }
.frow .fam { width: 80px; } .frow .siz { width: 46px; }
.fb { width: 20px; height: 21px; font-size: 13px; }
.fb + .fb { margin-left: 1px; }
.fc { width: 15px; height: 21px; }
.pressed { background: #c9c9c9; border: 1px solid #a8a8a8; }
.it { font-style: italic; font-family: "Liberation Serif", serif; font-size: 15px; }
.mini { height: 18px; margin: 0 3px; }
.grow1 { font-size: 15px; margin-left: 2px; } .shrink1 { font-size: 13px; }
.grow1 .ico, .shrink1 .ico { align-self: flex-start; margin-top: 3px; }
.fcol { height: 17px; line-height: 13px; border-bottom: 4px solid #d60000; width: 15px; }

.fbar { display: flex; align-items: center; height: 38px; flex: none; padding: 2px 4px 0 3px; }
.fbar > span:not(.dots) { display: flex; align-items: center; background: #fff; height: 22px; border: 1px solid #cfcfcf; }
.namebox { width: 93px; padding: 0 4px; }
.namebox input { flex: 1; }
.dots { width: 27px; text-align: center; color: #888; font-size: 13px; }
.fx { width: 100px; margin-right: 2px; }
.fx button { width: 33px; }
.fxb { font-family: "Liberation Serif", serif; font-style: italic; font-size: 16px; }
.fxb small { font-size: 12px; }
.formula { flex: 1; padding: 0 2px 0 9px; }
.formula input { flex: 1; }

.sheet { display: flex; flex: 1 1 0; min-height: 0; gap: 3px; padding-right: 2px; overflow: hidden; }
.grid { flex: 1; min-width: 0; display: flex; flex-direction: column; border-right: 1px solid #aaa; border-bottom: 1px solid #aaa; overflow: hidden; }
.colhead { display: flex; flex: none; height: 19px; border-bottom: 1px solid #a8a8a8; overflow: hidden; font-size: 13px; color: #333; }
.right .colhead { height: 18px; font-size: 12px; }
.left .colhead, .left .rowhead { font-family: "Liberation Serif", serif; }
.corner { width: 24px; flex: none; display: flex; align-items: flex-end; justify-content: flex-end; padding: 0 2px 3px 0; border-right: 1px solid #c4c4c4; }
.col { flex: none; width: 54px; text-align: center; line-height: 20px; border-right: 1px solid #c4c4c4; }
.col-A { width: 29px; } .col-B { width: 161px; } .col-H { width: 55px; } .col-I { width: 90px; } .col-J { width: 90px; }
.gridbody { display: flex; flex: 1; min-height: 0; background: #fff; }
.rowhead { width: 24px; flex: none; background: #e6e6e6; border-right: 1px solid #a8a8a8; font-size: 13px; color: #333; }
.rowhead span { display: flex; align-items: flex-end; justify-content: center; line-height: 15px; border-bottom: 1px solid #c4c4c4; }
.right .rowhead { font-size: 12px; }
.right .rowhead span { line-height: 13px; }
.cells { flex: 1; min-width: 0; padding-left: 27px; overflow: hidden; }
h1, h2, figure { margin: 0; }
h1 { height: 61px; line-height: 46px; padding-left: 5px; color: #000; font-family: Inter, sans-serif; font-weight: 700; font-size: 22px; white-space: nowrap; }
h2 { width: 488px; height: 24px; line-height: 24px; padding-left: 4px; border-bottom: 2px solid #e8e8e8; font-family: Inter, sans-serif; font-weight: 700; font-size: 12px; color: #333; white-space: nowrap; }
.right h1 { font-family: Lato, sans-serif; font-size: 19px; font-weight: 900; line-height: 47px; }
.right h2 { font-family: Lato, sans-serif; font-weight: 900; font-size: 10px; color: #44546a; padding-left: 3px; }
.frame { border: 2px solid #ececec; background: #fff; }
.frame svg { display: block; }
.barframe { width: 490px; margin-top: 6px; }
.right .barframe { width: 489px; }
.second.second { margin-top: 32px; }
.right .second.second { margin-top: 31px; }
.pies { display: flex; align-items: flex-start; gap: 19px; padding: 6px 0 0 3px; }
.right .pies { padding-top: 5px; }
.pies .frame + .frame { margin-top: 1px; }
.tick { font-size: 9px; fill: #444; font-family: "Liberation Serif", serif; }
.leg { font-size: 10px; fill: #444; font-family: "Liberation Serif", serif; }
.year { font-size: 10px; font-weight: 700; fill: #333; font-family: Inter, sans-serif; }
.plabel { font-size: 10px; font-weight: 700; font-family: Inter, sans-serif; }
.right .tick, .right .leg { font-family: "Open Sans", sans-serif; font-size: 8px; fill: #44546a; }
.right .year { font-family: Lato, sans-serif; font-size: 9px; fill: #44546a; }
.right .plabel { font-family: Lato, sans-serif; font-size: 9px; }

.vscroll { display: flex; flex-direction: column; width: 14px; flex: none; padding-top: 3px; }
.vscroll button { height: 14px; background: #fff; border: 1px solid #c6c6c6; flex: none; color: #777; }
.vthumb { flex: 1; background: #fff; border: 1px solid #c6c6c6; border-top: 0; }
.vtrack { height: 22px; background: #d6d6d6; }

.sheetbar { display: flex; align-items: center; height: 21px; flex: none; padding: 0 18px 0 11px; font-size: 12px; }
.nav { width: 21px; color: #1f6b43; }
.more { width: 20px; text-align: center; line-height: 16px; flex: none; }
.stab { height: 19px; line-height: 16px; text-align: center; margin-right: 3px; white-space: nowrap; flex: none; align-self: flex-start; border-left: 1px solid #d0d0d0; }
.green { background: #5df50a; color: #174a10; height: 18px; margin-top: 1px; line-height: 15px; border: 0; }
.active { font-weight: 700; color: #1f7444; border-bottom: 2px solid #1f7444; background: #fff; }
.left .active { background: linear-gradient(#fff, #d5f7c5); margin-right: 2px; }
.s1 { width: 74px; margin-left: 3px; } .s2 { width: 65px; margin-right: 2px; } .s3 { width: 114px; } .s4 { width: 29px; margin-right: 0; }
.r1 { width: 68px; margin: 0 0 0 2px; } .r2 { width: 146px; margin: 0; } .r3 { width: 77px; margin: 0; padding-left: 6px; }
.right .more { width: 19px; }
.right .more:nth-child(3) { width: 20px; }
.add { width: 23px; } .sheetbar .dots { width: 21px; }
.hscroll { display: flex; flex: 1; min-width: 0; height: 14px; }
.hscroll button { width: 14px; background: #fff; border: 1px solid #c6c6c6; color: #666; flex: none; }
.hthumb { width: 104px; background: #fff; border: 1px solid #c6c6c6; }
.htrack { flex: 1; background: #d6d6d6; }

.status { display: flex; align-items: center; height: 19px; flex: none; background: #f1f1f0; border-top: 1px solid #d8d8d8; padding-right: 18px; font-size: 10px; color: #555; }
.right .status { padding-right: 23px; }
.ready { flex: 1; padding-left: 5px; }
.view { width: 36px; height: 19px; }
.sel-view { background: #d0d0d0; }
.zb { width: 17px; font-size: 14px; }
.zoom { appearance: none; width: 92px; height: 12px; background: linear-gradient(#aaa, #aaa) center / 100% 1px no-repeat; }
.zoom::-webkit-slider-thumb { appearance: none; width: 5px; height: 10px; background: #666; }
.pc { width: 28px; text-align: right; font-size: 9px; white-space: nowrap; }
</style>
